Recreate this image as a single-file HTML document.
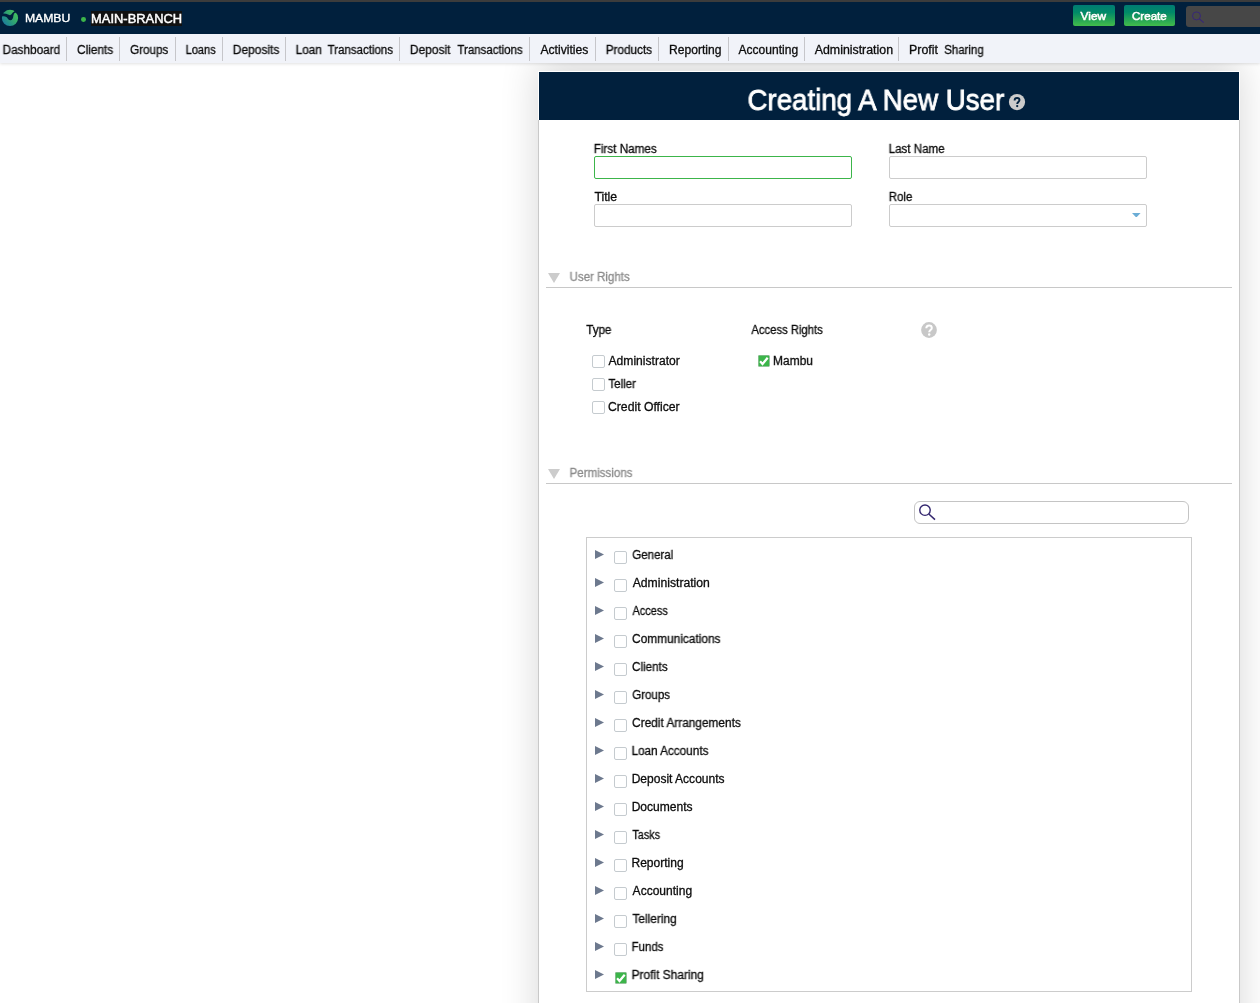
<!DOCTYPE html>
<html><head><meta charset="utf-8"><title>Creating A New User</title>
<style>
html,body{margin:0;padding:0;background:#fff;width:1260px;height:1003px;overflow:hidden;font-family:"Liberation Sans", sans-serif}
#r{position:relative;width:1260px;height:1003px;overflow:hidden}
.b{position:absolute;display:block}
.t{position:absolute;white-space:pre;line-height:20px;transform-origin:0 0;font-family:"Liberation Sans", sans-serif;will-change:transform}
</style></head><body><div id="r">
<div class="b" style="left:538px;top:71px;width:702px;height:1100px;background:#fff;box-shadow:0 -8px 36px rgba(0,0,0,.16)"></div>
<div class="b" style="left:538px;top:120px;width:1px;height:1000px;background:#c9c9c9"></div>
<div class="b" style="left:1239px;top:120px;width:1px;height:1000px;background:#c9c9c9"></div>
<div class="b" style="left:539px;top:72px;width:700px;height:48px;background:#01203d"></div>
<div class="b" style="left:0px;top:0px;width:1260px;height:2px;background:#3c3c3c"></div>
<div class="b" style="left:0px;top:2px;width:1260px;height:32px;background:#01203d"></div>
<div class="b" style="left:0px;top:34px;width:1260px;height:29px;background:#f1f3f9;box-shadow:0 1px 3px rgba(0,0,0,.12)"></div>
<div class="b" style="left:66px;top:37px;width:1px;height:24px;background:#c6c6ca"></div>
<div class="b" style="left:119px;top:37px;width:1px;height:24px;background:#c6c6ca"></div>
<div class="b" style="left:175px;top:37px;width:1px;height:24px;background:#c6c6ca"></div>
<div class="b" style="left:222px;top:37px;width:1px;height:24px;background:#c6c6ca"></div>
<div class="b" style="left:285px;top:37px;width:1px;height:24px;background:#c6c6ca"></div>
<div class="b" style="left:399px;top:37px;width:1px;height:24px;background:#c6c6ca"></div>
<div class="b" style="left:529px;top:37px;width:1px;height:24px;background:#c6c6ca"></div>
<div class="b" style="left:595px;top:37px;width:1px;height:24px;background:#c6c6ca"></div>
<div class="b" style="left:658px;top:37px;width:1px;height:24px;background:#c6c6ca"></div>
<div class="b" style="left:728px;top:37px;width:1px;height:24px;background:#c6c6ca"></div>
<div class="b" style="left:804px;top:37px;width:1px;height:24px;background:#c6c6ca"></div>
<div class="b" style="left:898px;top:37px;width:1px;height:24px;background:#c6c6ca"></div>
<div class="b" style="left:91px;top:11px;width:91px;height:15px;background:#111"></div>
<div class="b" style="left:81.2px;top:17.3px;width:4.8px;height:4.8px;background:#3cb54a;border-radius:50%"></div>
<div class="b" style="left:1073px;top:5px;width:42px;height:21px;background:linear-gradient(#007b73,#008a68 35%,#27a655 72%,#42bc4b);border-radius:2px"></div>
<div class="b" style="left:1124px;top:5px;width:51px;height:21px;background:linear-gradient(#007b73,#008a68 35%,#27a655 72%,#42bc4b);border-radius:2px"></div>
<div class="b" style="left:1186px;top:6px;width:80px;height:21px;background:#474747;border-radius:3px"></div>
<div class="b" style="left:594px;top:156px;width:258px;height:23px;box-sizing:border-box;border:1px solid #3cb54a;border-radius:2px;background:#fff"></div>
<div class="b" style="left:889px;top:156px;width:258px;height:23px;box-sizing:border-box;border:1px solid #ccc;border-radius:2px;background:#fff"></div>
<div class="b" style="left:594px;top:204px;width:258px;height:23px;box-sizing:border-box;border:1px solid #ccc;border-radius:2px;background:#fff"></div>
<div class="b" style="left:889px;top:204px;width:258px;height:23px;box-sizing:border-box;border:1px solid #ccc;border-radius:2px;background:#fff"></div>
<div class="b" style="left:546px;top:287px;width:686px;height:1px;background:#c8c8c8"></div>
<div class="b" style="left:546px;top:483px;width:686px;height:1px;background:#c8c8c8"></div>
<div class="b" style="left:592px;top:355px;width:13px;height:13px;box-sizing:border-box;border:1px solid #c5cbcf;border-radius:2px;background:#fff"></div>
<div class="b" style="left:592px;top:378px;width:13px;height:13px;box-sizing:border-box;border:1px solid #c5cbcf;border-radius:2px;background:#fff"></div>
<div class="b" style="left:592px;top:401px;width:13px;height:13px;box-sizing:border-box;border:1px solid #c5cbcf;border-radius:2px;background:#fff"></div>
<div class="b" style="left:614px;top:551px;width:13px;height:13px;box-sizing:border-box;border:1px solid #c5cbcf;border-radius:2px;background:#fff"></div>
<div class="b" style="left:614px;top:579px;width:13px;height:13px;box-sizing:border-box;border:1px solid #c5cbcf;border-radius:2px;background:#fff"></div>
<div class="b" style="left:614px;top:607px;width:13px;height:13px;box-sizing:border-box;border:1px solid #c5cbcf;border-radius:2px;background:#fff"></div>
<div class="b" style="left:614px;top:635px;width:13px;height:13px;box-sizing:border-box;border:1px solid #c5cbcf;border-radius:2px;background:#fff"></div>
<div class="b" style="left:614px;top:663px;width:13px;height:13px;box-sizing:border-box;border:1px solid #c5cbcf;border-radius:2px;background:#fff"></div>
<div class="b" style="left:614px;top:691px;width:13px;height:13px;box-sizing:border-box;border:1px solid #c5cbcf;border-radius:2px;background:#fff"></div>
<div class="b" style="left:614px;top:719px;width:13px;height:13px;box-sizing:border-box;border:1px solid #c5cbcf;border-radius:2px;background:#fff"></div>
<div class="b" style="left:614px;top:747px;width:13px;height:13px;box-sizing:border-box;border:1px solid #c5cbcf;border-radius:2px;background:#fff"></div>
<div class="b" style="left:614px;top:775px;width:13px;height:13px;box-sizing:border-box;border:1px solid #c5cbcf;border-radius:2px;background:#fff"></div>
<div class="b" style="left:614px;top:803px;width:13px;height:13px;box-sizing:border-box;border:1px solid #c5cbcf;border-radius:2px;background:#fff"></div>
<div class="b" style="left:614px;top:831px;width:13px;height:13px;box-sizing:border-box;border:1px solid #c5cbcf;border-radius:2px;background:#fff"></div>
<div class="b" style="left:614px;top:859px;width:13px;height:13px;box-sizing:border-box;border:1px solid #c5cbcf;border-radius:2px;background:#fff"></div>
<div class="b" style="left:614px;top:887px;width:13px;height:13px;box-sizing:border-box;border:1px solid #c5cbcf;border-radius:2px;background:#fff"></div>
<div class="b" style="left:614px;top:915px;width:13px;height:13px;box-sizing:border-box;border:1px solid #c5cbcf;border-radius:2px;background:#fff"></div>
<div class="b" style="left:614px;top:943px;width:13px;height:13px;box-sizing:border-box;border:1px solid #c5cbcf;border-radius:2px;background:#fff"></div>
<div class="b" style="left:914px;top:501px;width:275px;height:23px;box-sizing:border-box;border:1px solid #c4c4c4;border-radius:6px;background:#fff"></div>
<div class="b" style="left:586px;top:537px;width:606px;height:455px;box-sizing:border-box;border:1px solid #ccc"></div>
<svg class="b" style="left:548px;top:273px" width="12" height="10" viewBox="0 0 12 10"><path d="M0 0H12L6 10Z" fill="#ccc"/></svg>
<svg class="b" style="left:548px;top:469px" width="12" height="10" viewBox="0 0 12 10"><path d="M0 0H12L6 10Z" fill="#ccc"/></svg>
<svg class="b" style="left:1132px;top:212.9px" width="8.6" height="4.6" viewBox="0 0 8.6 4.6"><path d="M0 0H8.6L4.3 4.6Z" fill="#6badd6"/></svg>
<svg class="b" style="left:595px;top:550.3px" width="9" height="9" viewBox="0 0 9 9"><path d="M0 0L9 4.5L0 9Z" fill="#6d798e"/></svg>
<svg class="b" style="left:595px;top:578.3px" width="9" height="9" viewBox="0 0 9 9"><path d="M0 0L9 4.5L0 9Z" fill="#6d798e"/></svg>
<svg class="b" style="left:595px;top:606.3px" width="9" height="9" viewBox="0 0 9 9"><path d="M0 0L9 4.5L0 9Z" fill="#6d798e"/></svg>
<svg class="b" style="left:595px;top:634.3px" width="9" height="9" viewBox="0 0 9 9"><path d="M0 0L9 4.5L0 9Z" fill="#6d798e"/></svg>
<svg class="b" style="left:595px;top:662.3px" width="9" height="9" viewBox="0 0 9 9"><path d="M0 0L9 4.5L0 9Z" fill="#6d798e"/></svg>
<svg class="b" style="left:595px;top:690.3px" width="9" height="9" viewBox="0 0 9 9"><path d="M0 0L9 4.5L0 9Z" fill="#6d798e"/></svg>
<svg class="b" style="left:595px;top:718.3px" width="9" height="9" viewBox="0 0 9 9"><path d="M0 0L9 4.5L0 9Z" fill="#6d798e"/></svg>
<svg class="b" style="left:595px;top:746.3px" width="9" height="9" viewBox="0 0 9 9"><path d="M0 0L9 4.5L0 9Z" fill="#6d798e"/></svg>
<svg class="b" style="left:595px;top:774.3px" width="9" height="9" viewBox="0 0 9 9"><path d="M0 0L9 4.5L0 9Z" fill="#6d798e"/></svg>
<svg class="b" style="left:595px;top:802.3px" width="9" height="9" viewBox="0 0 9 9"><path d="M0 0L9 4.5L0 9Z" fill="#6d798e"/></svg>
<svg class="b" style="left:595px;top:830.3px" width="9" height="9" viewBox="0 0 9 9"><path d="M0 0L9 4.5L0 9Z" fill="#6d798e"/></svg>
<svg class="b" style="left:595px;top:858.3px" width="9" height="9" viewBox="0 0 9 9"><path d="M0 0L9 4.5L0 9Z" fill="#6d798e"/></svg>
<svg class="b" style="left:595px;top:886.3px" width="9" height="9" viewBox="0 0 9 9"><path d="M0 0L9 4.5L0 9Z" fill="#6d798e"/></svg>
<svg class="b" style="left:595px;top:914.3px" width="9" height="9" viewBox="0 0 9 9"><path d="M0 0L9 4.5L0 9Z" fill="#6d798e"/></svg>
<svg class="b" style="left:595px;top:942.3px" width="9" height="9" viewBox="0 0 9 9"><path d="M0 0L9 4.5L0 9Z" fill="#6d798e"/></svg>
<svg class="b" style="left:595px;top:970.3px" width="9" height="9" viewBox="0 0 9 9"><path d="M0 0L9 4.5L0 9Z" fill="#6d798e"/></svg>
<svg class="b" style="left:757.6px;top:355.4px" width="12.2" height="12" viewBox="0 0 12.2 12"><rect x="0.3" y="0.3" width="11.2" height="11.3" rx="1.2" fill="#3cb54a" stroke="#8fae95" stroke-width="0.6"/><path d="M2.1 6.3L4.5 9L9.7 2.7" fill="none" stroke="#fff" stroke-width="2.2"/></svg>
<svg class="b" style="left:614.5px;top:971.5px" width="12.2" height="12" viewBox="0 0 12.2 12"><rect x="0.3" y="0.3" width="11.2" height="11.3" rx="1.2" fill="#3cb54a" stroke="#8fae95" stroke-width="0.6"/><path d="M2.1 6.3L4.5 9L9.7 2.7" fill="none" stroke="#fff" stroke-width="2.2"/></svg>
<svg class="b" style="left:1008px;top:93px" width="18" height="18" viewBox="0 0 18 18"><circle cx="9" cy="9.05" r="8.1" fill="#cbcbcb"/><path d="M6.6 7.4C6.6 5.8 7.7 5 9.1 5C10.5 5 11.5 5.8 11.5 7C11.5 8.8 9.2 9.1 9.2 10.9" fill="none" stroke="#01203d" stroke-width="1.9"/><circle cx="9.2" cy="13.1" r="1.15" fill="#01203d"/></svg>
<svg class="b" style="left:920px;top:321px" width="18" height="18" viewBox="0 0 18 18"><circle cx="9" cy="9" r="7.9" fill="#c8c8c8"/><path d="M6.3 7.3C6.3 5.5 7.5 4.5 9.1 4.5C10.7 4.5 11.8 5.5 11.8 6.9C11.8 8.9 9.2 9.2 9.2 11.2" fill="none" stroke="#fff" stroke-width="2"/><circle cx="9.2" cy="13.5" r="1.2" fill="#fff"/></svg>
<svg class="b" style="left:918px;top:503px" width="20" height="20" viewBox="0 0 20 20"><circle cx="7" cy="7.2" r="5.2" fill="none" stroke="#33266e" stroke-width="1.4"/><path d="M10.8 11L17 16.6" stroke="#33266e" stroke-width="1.5"/></svg>
<svg class="b" style="left:1190px;top:9px" width="16" height="16" viewBox="0 0 16 16"><circle cx="6.5" cy="6.9" r="4" fill="none" stroke="#36257a" stroke-width="0.95"/><path d="M9.4 9.9L13.7 13.6" stroke="#36257a" stroke-width="1.05"/></svg>
<svg class="b" style="left:1px;top:9px" width="18" height="18" viewBox="0 0 18 18"><defs><linearGradient id="lg" x1="0" y1="1" x2="1" y2="0.2"><stop offset="0.05" stop-color="#1b76a2"/><stop offset="0.35" stop-color="#238f88"/><stop offset="0.65" stop-color="#34a96b"/><stop offset="1" stop-color="#47c65c"/></linearGradient></defs>
<circle cx="9" cy="8.9" r="8.1" fill="url(#lg)"/>
<path d="M0.2 5L2.2 4.5L5 4.8L7 5.5L9 6.3L10.2 5.6L11 4.6L11.8 3.4L13.5 2.3L15 1.5L17.5 4.5L16.3 5.2C15.9 4.4 15.2 3.8 14.5 3.8C13.9 3.8 13.4 4.2 13 4.8L12.4 6.4L12.15 8.2L11.6 9.8L10.6 10.95L9.4 11.3L8.1 10.9L7 9.9L6 8.6L4.8 7.7L3 7.15L0.2 7.35Z" fill="#01203d"/></svg>
<span class="t" style="left:24px;top:8.29px;font-size:11px;color:#fff;font-weight:normal;transform:translateX(0.90px) scaleX(1.1092);-webkit-text-stroke:0.35px #fff;">MAMBU</span>
<span class="t" style="left:91px;top:8.64px;font-size:12px;color:#fff;font-weight:normal;transform:translateX(0.10px) scaleX(1.0751);-webkit-text-stroke:0.45px #fff;">MAIN-BRANCH</span>
<span class="t" style="left:1080px;top:6.22px;font-size:11.5px;color:#fff;font-weight:normal;transform:translateX(0.53px) scaleX(1.0329);-webkit-text-stroke:0.55px #fff;text-shadow:0 -1px 0 rgba(0,60,40,.35);">View</span>
<span class="t" style="left:1131px;top:6.22px;font-size:11.5px;color:#fff;font-weight:normal;transform:translateX(0.92px) scaleX(1.0096);-webkit-text-stroke:0.55px #fff;text-shadow:0 -1px 0 rgba(0,60,40,.35);">Create</span>
<span class="t" style="left:2px;top:39.64px;font-size:12px;color:#0c0c0c;font-weight:normal;transform:translateX(0.55px) scaleX(0.9828);-webkit-text-stroke:0.3px #0c0c0c;">Dashboard</span>
<span class="t" style="left:77px;top:39.64px;font-size:12px;color:#0c0c0c;font-weight:normal;transform:translateX(0.09px) scaleX(0.9806);-webkit-text-stroke:0.3px #0c0c0c;">Clients</span>
<span class="t" style="left:130px;top:39.64px;font-size:12px;color:#0c0c0c;font-weight:normal;transform:translateX(0.10px) scaleX(0.9720);-webkit-text-stroke:0.3px #0c0c0c;">Groups</span>
<span class="t" style="left:185px;top:39.64px;font-size:12px;color:#0c0c0c;font-weight:normal;transform:translateX(0.59px) scaleX(0.9209);-webkit-text-stroke:0.3px #0c0c0c;">Loans</span>
<span class="t" style="left:232px;top:39.64px;font-size:12px;color:#0c0c0c;font-weight:normal;transform:translateX(0.73px) scaleX(0.9971);-webkit-text-stroke:0.3px #0c0c0c;">Deposits</span>
<span class="t" style="left:295px;top:39.64px;font-size:12px;color:#0c0c0c;font-weight:normal;transform:translateX(0.59px) scaleX(0.9871);-webkit-text-stroke:0.3px #0c0c0c;">Loan</span>
<span class="t" style="left:327px;top:39.64px;font-size:12px;color:#0c0c0c;font-weight:normal;transform:translateX(0.56px) scaleX(0.9586);-webkit-text-stroke:0.3px #0c0c0c;">Transactions</span>
<span class="t" style="left:409px;top:39.64px;font-size:12px;color:#0c0c0c;font-weight:normal;transform:translateX(0.83px) scaleX(0.9973);-webkit-text-stroke:0.3px #0c0c0c;">Deposit</span>
<span class="t" style="left:457px;top:39.64px;font-size:12px;color:#0c0c0c;font-weight:normal;transform:translateX(0.39px) scaleX(0.9559);-webkit-text-stroke:0.3px #0c0c0c;">Transactions</span>
<span class="t" style="left:540px;top:39.64px;font-size:12px;color:#0c0c0c;font-weight:normal;transform:translateX(0.40px) scaleX(1.0119);-webkit-text-stroke:0.3px #0c0c0c;">Activities</span>
<span class="t" style="left:605px;top:39.64px;font-size:12px;color:#0c0c0c;font-weight:normal;transform:translateX(0.75px) scaleX(0.9785);-webkit-text-stroke:0.3px #0c0c0c;">Products</span>
<span class="t" style="left:669px;top:39.64px;font-size:12px;color:#0c0c0c;font-weight:normal;transform:translateX(0.02px) scaleX(1.0077);-webkit-text-stroke:0.3px #0c0c0c;">Reporting</span>
<span class="t" style="left:738px;top:39.64px;font-size:12px;color:#0c0c0c;font-weight:normal;transform:translateX(0.54px) scaleX(1.0040);-webkit-text-stroke:0.3px #0c0c0c;">Accounting</span>
<span class="t" style="left:814px;top:39.64px;font-size:12px;color:#0c0c0c;font-weight:normal;transform:translateX(0.70px) scaleX(1.0306);-webkit-text-stroke:0.3px #0c0c0c;">Administration</span>
<span class="t" style="left:909px;top:39.64px;font-size:12px;color:#0c0c0c;font-weight:normal;transform:translateX(0.04px) scaleX(1.0311);-webkit-text-stroke:0.3px #0c0c0c;">Profit</span>
<span class="t" style="left:944px;top:39.64px;font-size:12px;color:#0c0c0c;font-weight:normal;transform:translateX(0.19px) scaleX(0.9552);-webkit-text-stroke:0.3px #0c0c0c;">Sharing</span>
<span class="t" style="left:747px;top:89.58px;font-size:29.5px;color:#fff;font-weight:normal;transform:translateX(0.45px) scaleX(0.9378);-webkit-text-stroke:0.8px #fff;">Creating A New User</span>
<span class="t" style="left:593px;top:138.94px;font-size:12px;color:#0c0c0c;font-weight:normal;transform:translateX(0.71px) scaleX(0.9743);-webkit-text-stroke:0.3px #0c0c0c;">First Names</span>
<span class="t" style="left:888px;top:138.94px;font-size:12px;color:#0c0c0c;font-weight:normal;transform:translateX(0.60px) scaleX(0.9668);-webkit-text-stroke:0.3px #0c0c0c;">Last Name</span>
<span class="t" style="left:594px;top:186.84px;font-size:12px;color:#0c0c0c;font-weight:normal;transform:translateX(0.43px) scaleX(1.0236);-webkit-text-stroke:0.3px #0c0c0c;">Title</span>
<span class="t" style="left:888px;top:186.84px;font-size:12px;color:#0c0c0c;font-weight:normal;transform:translateX(0.74px) scaleX(0.9564);-webkit-text-stroke:0.3px #0c0c0c;">Role</span>
<span class="t" style="left:569px;top:266.84px;font-size:12px;color:#8c8c8c;font-weight:normal;transform:translateX(0.55px) scaleX(0.9595);-webkit-text-stroke:0.3px #8c8c8c;">User Rights</span>
<span class="t" style="left:569px;top:462.84px;font-size:12px;color:#8c8c8c;font-weight:normal;transform:translateX(0.51px) scaleX(0.9646);-webkit-text-stroke:0.3px #8c8c8c;">Permissions</span>
<span class="t" style="left:586px;top:319.84px;font-size:12px;color:#0c0c0c;font-weight:normal;transform:translateX(0.21px) scaleX(0.9687);-webkit-text-stroke:0.3px #0c0c0c;">Type</span>
<span class="t" style="left:751px;top:319.84px;font-size:12px;color:#0c0c0c;font-weight:normal;transform:translateX(0.37px) scaleX(0.9393);-webkit-text-stroke:0.3px #0c0c0c;">Access Rights</span>
<span class="t" style="left:608px;top:350.84px;font-size:12px;color:#0c0c0c;font-weight:normal;transform:translateX(0.50px) scaleX(1.0083);-webkit-text-stroke:0.3px #0c0c0c;">Administrator</span>
<span class="t" style="left:608px;top:373.84px;font-size:12px;color:#0c0c0c;font-weight:normal;transform:translateX(0.39px) scaleX(0.9583);-webkit-text-stroke:0.3px #0c0c0c;">Teller</span>
<span class="t" style="left:607px;top:396.84px;font-size:12px;color:#0c0c0c;font-weight:normal;transform:translateX(0.95px) scaleX(1.0178);-webkit-text-stroke:0.3px #0c0c0c;">Credit Officer</span>
<span class="t" style="left:772px;top:350.84px;font-size:12px;color:#0c0c0c;font-weight:normal;transform:translateX(0.93px) scaleX(0.9996);-webkit-text-stroke:0.3px #0c0c0c;">Mambu</span>
<span class="t" style="left:632px;top:544.84px;font-size:12px;color:#0c0c0c;font-weight:normal;transform:translateX(0.26px) scaleX(0.9616);-webkit-text-stroke:0.3px #0c0c0c;">General</span>
<span class="t" style="left:632px;top:572.84px;font-size:12px;color:#0c0c0c;font-weight:normal;transform:translateX(0.67px) scaleX(1.0155);-webkit-text-stroke:0.3px #0c0c0c;">Administration</span>
<span class="t" style="left:632px;top:600.84px;font-size:12px;color:#0c0c0c;font-weight:normal;transform:translateX(0.48px) scaleX(0.9122);-webkit-text-stroke:0.3px #0c0c0c;">Access</span>
<span class="t" style="left:632px;top:628.84px;font-size:12px;color:#0c0c0c;font-weight:normal;transform:translateX(0.03px) scaleX(0.9911);-webkit-text-stroke:0.3px #0c0c0c;">Communications</span>
<span class="t" style="left:632px;top:656.84px;font-size:12px;color:#0c0c0c;font-weight:normal;transform:translateX(0.01px) scaleX(0.9710);-webkit-text-stroke:0.3px #0c0c0c;">Clients</span>
<span class="t" style="left:632px;top:684.84px;font-size:12px;color:#0c0c0c;font-weight:normal;transform:translateX(0.25px) scaleX(0.9600);-webkit-text-stroke:0.3px #0c0c0c;">Groups</span>
<span class="t" style="left:632px;top:712.84px;font-size:12px;color:#0c0c0c;font-weight:normal;transform:translateX(0.04px) scaleX(0.9888);-webkit-text-stroke:0.3px #0c0c0c;">Credit Arrangements</span>
<span class="t" style="left:631px;top:740.84px;font-size:12px;color:#0c0c0c;font-weight:normal;transform:translateX(0.57px) scaleX(0.9760);-webkit-text-stroke:0.3px #0c0c0c;">Loan Accounts</span>
<span class="t" style="left:631px;top:768.84px;font-size:12px;color:#0c0c0c;font-weight:normal;transform:translateX(0.63px) scaleX(1.0022);-webkit-text-stroke:0.3px #0c0c0c;">Deposit Accounts</span>
<span class="t" style="left:631px;top:796.84px;font-size:12px;color:#0c0c0c;font-weight:normal;transform:translateX(0.63px) scaleX(1.0054);-webkit-text-stroke:0.3px #0c0c0c;">Documents</span>
<span class="t" style="left:632px;top:824.84px;font-size:12px;color:#0c0c0c;font-weight:normal;transform:translateX(0.38px) scaleX(0.8993);-webkit-text-stroke:0.3px #0c0c0c;">Tasks</span>
<span class="t" style="left:631px;top:852.84px;font-size:12px;color:#0c0c0c;font-weight:normal;transform:translateX(0.45px) scaleX(1.0041);-webkit-text-stroke:0.3px #0c0c0c;">Reporting</span>
<span class="t" style="left:632px;top:880.84px;font-size:12px;color:#0c0c0c;font-weight:normal;transform:translateX(0.61px) scaleX(1.0021);-webkit-text-stroke:0.3px #0c0c0c;">Accounting</span>
<span class="t" style="left:632px;top:908.84px;font-size:12px;color:#0c0c0c;font-weight:normal;transform:translateX(0.40px) scaleX(0.9936);-webkit-text-stroke:0.3px #0c0c0c;">Tellering</span>
<span class="t" style="left:631px;top:936.84px;font-size:12px;color:#0c0c0c;font-weight:normal;transform:translateX(0.56px) scaleX(0.9580);-webkit-text-stroke:0.3px #0c0c0c;">Funds</span>
<span class="t" style="left:631px;top:964.84px;font-size:12px;color:#0c0c0c;font-weight:normal;transform:translateX(0.55px) scaleX(0.9956);-webkit-text-stroke:0.3px #0c0c0c;">Profit Sharing</span>
</div></body></html>
